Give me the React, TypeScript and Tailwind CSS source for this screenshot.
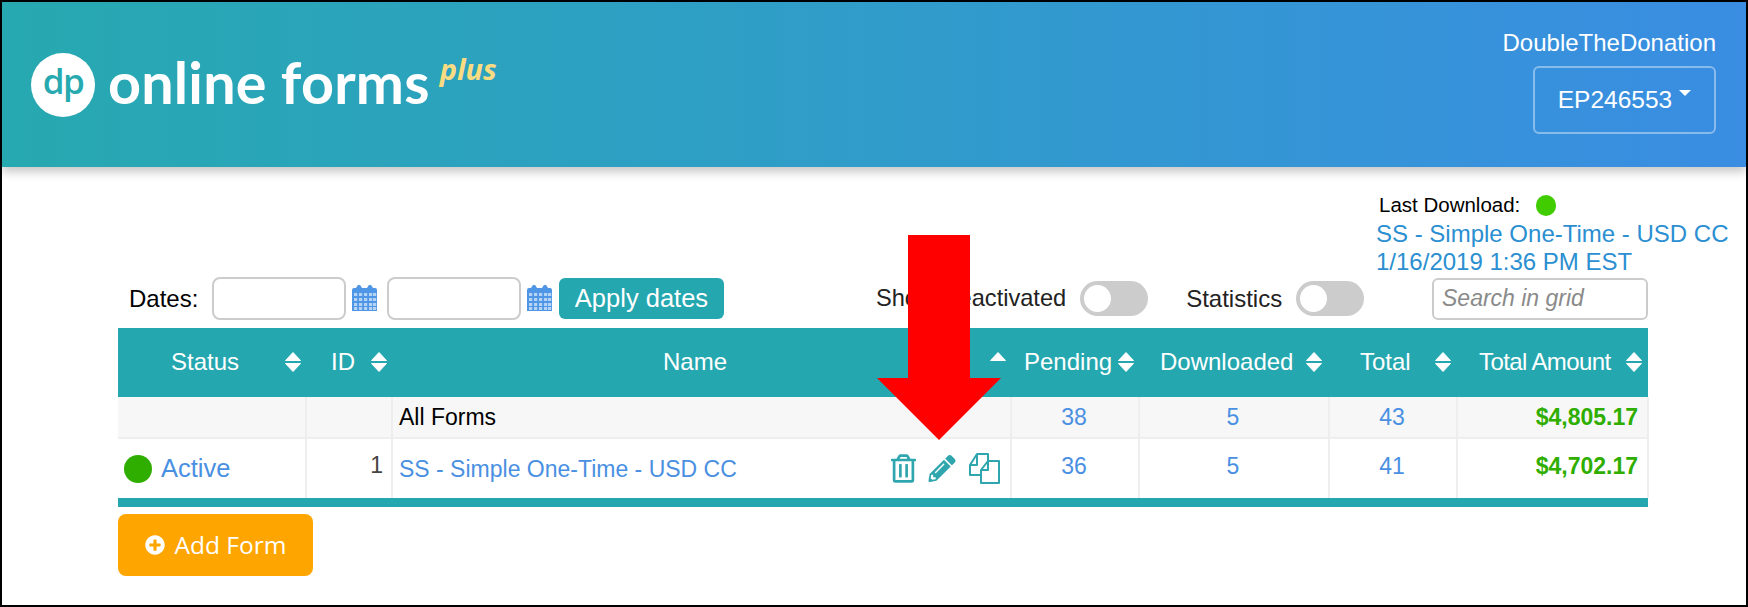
import React from 'react';
import { FaPencilAlt, FaPlusCircle, FaRegTrashAlt } from 'react-icons/fa';

const SortIcon = ({ up = true, down = true }: { up?: boolean; down?: boolean }) => (
    <svg width="16" height="20" viewBox="0 0 16 20" className="shrink-0" fill="currentColor">
        {up && <path d="M8 0.5 L15.5 8.5 H0.5 Z" stroke="currentColor" strokeWidth="1" strokeLinejoin="round" />}
        {down && <path d="M8 19.5 L15.5 11.5 H0.5 Z" stroke="currentColor" strokeWidth="1" strokeLinejoin="round" />}
    </svg>
);

const CalendarIcon = () => (
    <svg width="27" height="29" viewBox="0 0 27 29" className="shrink-0">
        <path d="M1 7 Q1 5 3 5 H5 Q8 -1.5 11 5 H16 Q19 -1.5 22 5 H24 Q26 5 26 7 V28 H1 Z" fill="#4f97e6" />
        {[10, 15, 20, 24].map((y) =>
            [3, 8, 13, 18, 22].map((x) => <rect key={`${x}-${y}`} x={x} y={y} width="3.2" height="3" fill="#b4d3f5" />)
        )}
    </svg>
);

const CopyIcon = () => (
    <svg width="31" height="31" viewBox="0 0 31 31" fill="none" stroke="#2fa6ad" strokeWidth="2" strokeLinejoin="round">
        <path d="M11 22 H1 V12 L8 1 H19 V8" />
        <path d="M1 12 H8 V1" />
        <path d="M19 8 H30 V30 H12 V17 Z" />
        <path d="M19 8 V17 H12" />
    </svg>
);

const Toggle = () => (
    <div className="w-[68px] h-[35px] bg-[#cccccc] rounded-full flex items-center pl-1">
        <div className="w-[27px] h-[27px] bg-white rounded-full" />
    </div>
);

const columns = [
    { label: 'Status', cls: 'w-[188px] pl-[53px] pr-[5px]' },
    { label: 'ID', cls: 'w-[86px] pl-[25px] pr-[5px]' },
    { label: 'Name', cls: 'w-[619px] pl-[271px] pr-[5px]', sortedUp: true },
    { label: 'Pending', cls: 'w-[128px] pl-[13px] pr-[5px]' },
    { label: 'Downloaded', cls: 'w-[190px] pl-[21px] pr-[7px]' },
    { label: 'Total', cls: 'w-[128px] pl-[31px] pr-[6px]' },
    { label: 'Total Amount', cls: 'w-[191px] pl-[22px] pr-[6px] tracking-[-0.6px]' },
];

const cell = 'border-r-2 border-[#eeeeee] p-0';
const linkCell = `${cell} pr-[2px] text-center text-[#4a90e2]`;
const amountCell = 'p-0 pr-[9px] text-right font-bold text-[#2fae00] border-r-2 border-[#eeeeee]';

export default function App() {
    return (
        <div className="relative h-[607px] w-[1748px] box-border border-2 border-black bg-white overflow-hidden text-[23px] font-['Liberation_Sans',Arial,sans-serif]">
            {/* Top bar */}
            <header className="h-[165px] bg-gradient-to-r from-[#27a9b0] to-[#3a8de2] shadow-[0_5px_9px_rgba(0,0,0,0.22)] flex justify-between pl-[29px] pr-[30px]">
                <div className="flex items-start pt-[51px]">
                    <div className="w-[64px] h-[64px] rounded-full bg-white flex items-center justify-center text-[#27a9b0] font-semibold text-[35px] leading-[40px] pb-[8px] tracking-[-1.5px] font-['Open_Sans',sans-serif]">dp</div>
                    <div className="ml-[13px] mt-[-1px] text-white text-[57.5px] leading-[60px] font-bold tracking-[0.2px] font-['Lato',sans-serif]">online forms</div>
                    <div className="ml-[10px] mt-[-2px] text-[#f9dc82] text-[29px] leading-[36px] font-bold italic font-['Open_Sans',sans-serif]">plus</div>
                </div>
                <div className="flex flex-col items-end pt-[28px] text-white">
                    <div className="text-[24px] leading-[26px]">DoubleTheDonation</div>
                    <button className="mt-[10px] w-[183px] h-[68px] rounded-md border-2 border-white/40 flex items-center justify-center gap-[7px] text-[24.5px]">
                        EP246553
                        <span className="mb-[14px] border-x-[6px] border-t-[6px] border-x-transparent border-t-white" />
                    </button>
                </div>
            </header>

            {/* Last download */}
            <div className="ml-[1374px] mt-[27px] w-[370px]">
                <div className="flex items-center h-[22px] pl-[3px] text-[20.5px] text-black">
                    Last Download:
                    <span className="ml-4 w-5 h-[21px] rounded-full bg-[#41cc00]" />
                </div>
                <div className="mt-1 text-[24px] leading-[28px] text-[#2b8fd1]">
                    <div>SS - Simple One-Time - USD CC</div>
                    <div>1/16/2019 1:36 PM EST</div>
                </div>
            </div>

            {/* Filters */}
            <div className="mt-[1px] ml-[127px] w-[1519px] h-[43px] flex items-center text-[24px] text-[#222222]">
                <span className="w-[83px] text-black">Dates:</span>
                <input className="w-[134px] h-[43px] bg-white border-2 border-[#cccccc] rounded-lg" />
                <span className="ml-[5px] mb-[2px]"><CalendarIcon /></span>
                <input className="ml-[9px] w-[134px] h-[43px] bg-white border-2 border-[#cccccc] rounded-lg" />
                <span className="ml-[5px] mb-[2px]"><CalendarIcon /></span>
                <button className="ml-[6px] w-[165px] h-[41px] bg-[#25a7b0] rounded-md text-white text-[25.5px]">Apply dates</button>
                <span className="ml-[152px] text-[23.6px]">Show Deactivated</span>
                <span className="ml-[14px]"><Toggle /></span>
                <span className="ml-[38px]">Statistics</span>
                <span className="ml-[14px]"><Toggle /></span>
                <input
                    className="ml-auto w-[216px] h-[42px] bg-white border-2 border-[#cccccc] rounded-md px-[8px] text-[23px] italic placeholder:text-[#8a8a8a]"
                    placeholder="Search in grid"
                />
            </div>

            {/* Grid */}
            <table className="mt-[8px] ml-[116px] w-[1530px] table-fixed border-collapse">
                <thead>
                    <tr className="bg-[#25a7b0] text-white h-[69px]">
                        {columns.map((col) => (
                            <th key={col.label} className={`${col.cls} font-normal text-[24px] pb-[2px]`}>
                                <div className="flex items-center justify-between">
                                    <span className="whitespace-nowrap">{col.label}</span>
                                    {col.sortedUp ? <SortIcon down={false} /> : <SortIcon />}
                                </div>
                            </th>
                        ))}
                    </tr>
                </thead>
                <tbody>
                    <tr className="h-[41px] bg-[#f7f7f7] border-b-2 border-[#eeeeee]">
                        <td className={cell} />
                        <td className={cell} />
                        <td className={`${cell} pl-[6px] text-black`}>All Forms</td>
                        <td className={linkCell}>38</td>
                        <td className={linkCell}>5</td>
                        <td className={linkCell}>43</td>
                        <td className={amountCell}>$4,805.17</td>
                    </tr>
                    <tr className="h-[60px]">
                        <td className={cell}>
                            <div className="flex items-center pl-[6px] gap-[9px] text-[#4a90e2] text-[25.5px]">
                                <span className="w-7 h-7 rounded-full bg-[#2fae00]" />
                                Active
                            </div>
                        </td>
                        <td className={`${cell} pr-[8px] text-right text-[#444444] pb-[7px]`}>1</td>
                        <td className={cell}>
                            <div className="flex items-center justify-between pl-[6px] pr-[10px]">
                                <span className="text-[#4a90e2] pt-[2px]">SS - Simple One-Time - USD CC</span>
                                <span className="flex items-center text-[#2fa6ad]">
                                    <FaRegTrashAlt className="w-[25px] h-[29px]" />
                                    <FaPencilAlt className="ml-[12px] w-[28px] h-[27px]" />
                                    <span className="ml-[13px]"><CopyIcon /></span>
                                </span>
                            </div>
                        </td>
                        <td className={`${linkCell} pb-[4px]`}>36</td>
                        <td className={`${linkCell} pb-[4px]`}>5</td>
                        <td className={`${linkCell} pb-[4px]`}>41</td>
                        <td className={`${amountCell} pb-[4px]`}>$4,702.17</td>
                    </tr>
                    <tr className="h-[9px] bg-[#25a7b0]">
                        <td colSpan={7} className="p-0" />
                    </tr>
                </tbody>
            </table>

            <button className="mt-[7px] ml-[116px] w-[195px] h-[62px] bg-[#ffa500] rounded-lg text-white text-[24.5px] flex items-center justify-center gap-[10px] font-['Open_Sans',sans-serif]">
                <FaPlusCircle className="w-5 h-5" />
                Add Form
            </button>

            {/* Red callout arrow */}
            <svg className="absolute left-[875px] top-[233px]" width="124" height="205" viewBox="0 0 124 205">
                <polygon points="31,0 93,0 93,143 124,143 62,205 0,143 31,143" fill="#ff0000" />
            </svg>
        </div>
    );
}
